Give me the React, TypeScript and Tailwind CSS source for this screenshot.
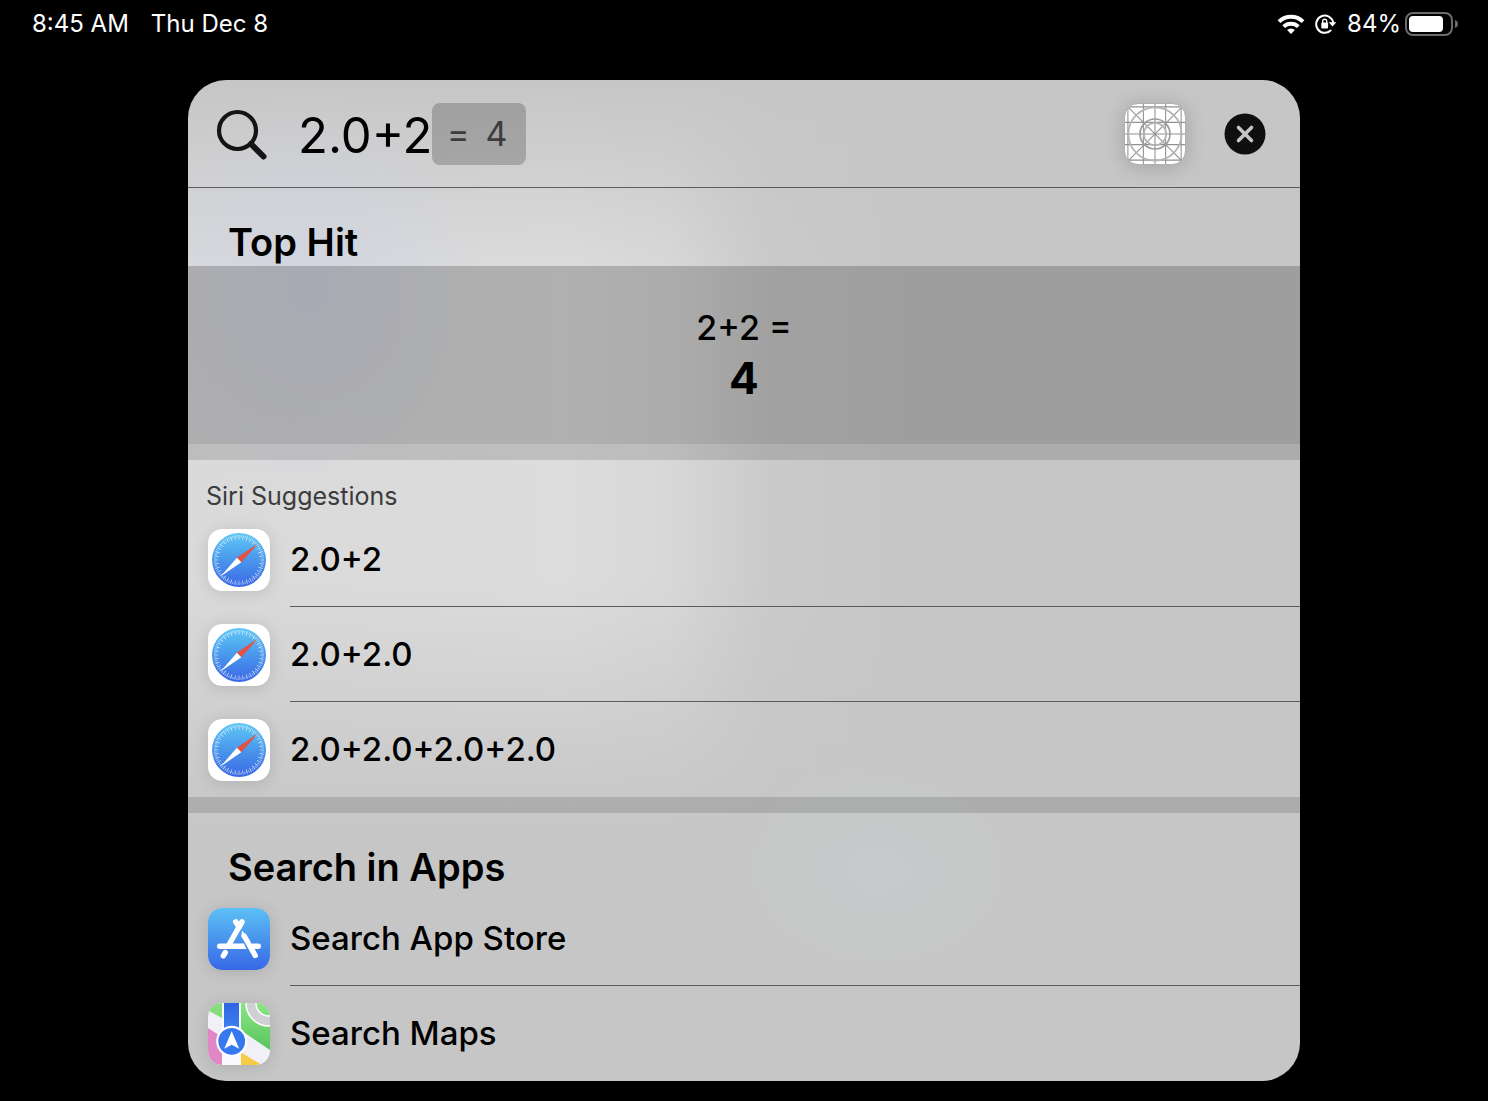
import { useState } from "react";
import type { ReactNode } from "react";

function WifiIcon() {
  return (
    <svg width="28" height="22" viewBox="0 0 28 22" fill="none" stroke="#fff" strokeWidth="4" aria-hidden="true">
      <path d="M2 8.600a17.400 17.400 0 0 1 24 0" />
      <path d="M6.700 13.600a10.600 10.600 0 0 1 14.600 0" />
      <path d="M14 21l-3.900-4a5.600 5.600 0 0 1 7.800 0z" fill="#fff" stroke="none" />
    </svg>
  );
}

function RotationLockIcon() {
  return (
    <svg width="22" height="22" viewBox="0 0 22 22" fill="none" aria-hidden="true">
      <path d="M15.600 17.600A8.600 8.600 0 1 1 18.200 9.400" stroke="#fff" strokeWidth="2" strokeLinecap="round" />
      <path d="M13.600 9.200h7.800l-3.900 4.400z" fill="#fff" />
      <rect x="6.300" y="9.600" width="6.800" height="5.800" rx="1" fill="#fff" />
      <path d="M7.700 10V8.200a2 2 0 0 1 4 0V10" stroke="#fff" strokeWidth="1.400" />
    </svg>
  );
}

function BatteryIcon() {
  return (
    <svg width="54" height="24" viewBox="0 0 54 24" fill="none" aria-hidden="true">
      <rect x="1" y="1" width="46" height="22" rx="7" stroke="#6b6b6b" strokeWidth="2" />
      <rect x="4" y="4" width="34" height="16" rx="4" fill="#fff" />
      <path d="M50 8c2.200.6 3 2.300 3 4s-.8 3.400-3 4z" fill="#6b6b6b" />
    </svg>
  );
}

function SearchIcon() {
  return (
    <svg width="52" height="52" viewBox="0 0 52 52" fill="none" stroke="#141414" aria-hidden="true">
      <circle cx="21.500" cy="21.500" r="18.500" strokeWidth="4.200" />
      <path d="M35 35l12.500 12.500" strokeWidth="6" strokeLinecap="round" />
    </svg>
  );
}

function GridIcon() {
  const marks = [3, 19, 31, 42, 58];
  return (
    <svg
      width="62"
      height="62"
      viewBox="0 0 62 62"
      fill="none"
      className="rounded-[14px] border border-[#b0b0b0] bg-white shadow-[0_2px_20px_rgba(0,0,0,0.18)]"
      role="img"
      aria-label="App"
    >
      <g stroke="#909090" strokeWidth="1.100">
        {marks.map((m) => (
          <path key={m} d={`M${m} 0V62M0 ${m}H62`} />
        ))}
        <path d="M0 0L62 62M62 0L0 62" />
      </g>
      <g stroke="#b4b4b4" strokeWidth="1.800">
        <circle cx="31" cy="31" r="27.500" />
        <circle cx="31" cy="31" r="15.500" stroke="#9c9c9c" />
        <circle cx="31" cy="31" r="11.500" />
      </g>
    </svg>
  );
}

function ClearIcon() {
  return (
    <svg width="42" height="42" viewBox="0 0 42 42" fill="none" aria-hidden="true">
      <circle cx="21" cy="21" r="20.500" fill="#0f0f0f" />
      <path d="M14.500 14.500l13 13M27.500 14.500l-13 13" stroke="#c6c6c6" strokeWidth="3.600" strokeLinecap="round" />
    </svg>
  );
}

const iconFrame = "shrink-0 rounded-[14px] shadow-[0_2px_16px_rgba(0,0,0,0.13)]";

function SafariIcon() {
  return (
    <svg width="62" height="62" viewBox="0 0 62 62" fill="none" className={iconFrame} aria-hidden="true">
      <defs>
        <linearGradient id="safari-dial" x1="0" y1="0" x2="0" y2="1">
          <stop offset="0" stopColor="#5fc8f5" />
          <stop offset="0.500" stopColor="#4a97ec" />
          <stop offset="1" stopColor="#3a67e6" />
        </linearGradient>
      </defs>
      <rect width="62" height="62" rx="14" fill="#fff" />
      <circle cx="31" cy="31" r="27" fill="url(#safari-dial)" />
      <circle cx="31" cy="31" r="22.800" stroke="#fff" strokeOpacity="0.7" strokeWidth="4.400" pathLength="360" strokeDasharray="2.200 7.800" strokeDashoffset="1.100" />
      <circle cx="31" cy="31" r="23.800" stroke="#fff" strokeOpacity="0.6" strokeWidth="2.400" pathLength="360" strokeDasharray="2 8" strokeDashoffset="6" />
      <path d="M50 14.500L28.900 28.700L33.300 33.300z" fill="#e5503f" />
      <path d="M12.500 47.500L28.900 28.700L33.300 33.300z" fill="#fff" />
    </svg>
  );
}

function AppStoreIcon() {
  return (
    <svg width="62" height="62" viewBox="0 0 62 62" fill="none" className={iconFrame} aria-hidden="true">
      <defs>
        <linearGradient id="store-fill" x1="0" y1="0" x2="0" y2="1">
          <stop offset="0" stopColor="#5cc0f5" />
          <stop offset="1" stopColor="#3768e6" />
        </linearGradient>
      </defs>
      <rect width="62" height="62" rx="14" fill="url(#store-fill)" />
      <g stroke="#fff" strokeWidth="5.400" strokeLinecap="round">
        <path d="M27.700 13.800L31 19" />
        <path d="M34 13.800L20.800 37" strokeLinecap="butt" />
        <path d="M34 13.800L31 19" />
        <path d="M17.300 44.500L15.300 47.800" />
        <path d="M11.700 38.300H34" />
        <path d="M45 38.300H50.300" />
        <path d="M36.200 28L47.200 47.500" />
      </g>
      <path d="M34.600 22.500c-1.400 2.500-1.600 5-.4 7.600l5.200 1z" fill="#fff" />
      <path d="M33.500 35.600h2l3.200 5.400h-5z" fill="#fff" />
    </svg>
  );
}

function MapsIcon() {
  return (
    <svg width="62" height="62" viewBox="0 0 62 62" fill="none" className={iconFrame} aria-hidden="true">
      <defs>
        <clipPath id="maps-clip">
          <rect width="62" height="62" rx="14" />
        </clipPath>
        <linearGradient id="maps-green" x1="0" y1="0" x2="0" y2="1">
          <stop offset="0" stopColor="#8be682" />
          <stop offset="1" stopColor="#58c45f" />
        </linearGradient>
        <linearGradient id="maps-blue" x1="0" y1="0" x2="0" y2="1">
          <stop offset="0" stopColor="#2f64e2" />
          <stop offset="1" stopColor="#3f84f3" />
        </linearGradient>
      </defs>
      <g clipPath="url(#maps-clip)">
        <rect width="62" height="62" fill="#f0f0f6" />
        <path d="M0 0H14V15L0 7.500z" fill="#86dd7b" />
        <path d="M33 0H62V47L33 27.500z" fill="url(#maps-green)" />
        <circle cx="61" cy="0" r="18" stroke="#fff" strokeWidth="11.500" />
        <circle cx="61" cy="0" r="18" stroke="#cfcfd4" strokeWidth="8.500" />
        <path d="M0 25L14 34V62H0z" fill="#e287c6" />
        <path d="M33 49.500L54 62H33z" fill="#f6cb45" />
        <path d="M14 0H33V62H14z" fill="#fafafd" />
        <path d="M16 0H31V30H16z" fill="url(#maps-blue)" />
        <circle cx="23.700" cy="38.300" r="15.500" fill="#fff" />
        <circle cx="23.700" cy="38.300" r="13.400" fill="#3578f0" />
        <path d="M23.700 28.300L31.200 45.800L23.700 41.800L16.200 45.800z" fill="#fff" />
      </g>
    </svg>
  );
}

function ResultRow({ icon, label, last }: { icon: ReactNode; label: string; last?: boolean }) {
  return (
    <li>
      <button type="button" className="flex h-[95px] w-full items-center gap-5 pl-5 text-left">
        {icon}
        <span
          className={`flex h-full flex-1 items-center border-b text-[33px] leading-10 font-medium ${
            last ? "border-transparent" : "border-[#5c5c5c]"
          }`}
        >
          {label}
        </span>
      </button>
    </li>
  );
}

function SectionTitle({ children }: { children: ReactNode }) {
  return <h2 className="h-[78px] px-10 pt-[30px] text-[38px] leading-12 font-semibold">{children}</h2>;
}

function Divider() {
  return <div className="h-4 bg-black/13" />;
}

const suggestions = ["2.0+2", "2.0+2.0", "2.0+2.0+2.0+2.0"];

export default function App() {
  const [query, setQuery] = useState("2.0+2");

  return (
    <div className="min-h-screen bg-black pb-5 font-['Inter',sans-serif] text-black">
      <header className="flex h-12 items-center justify-between pr-[29px] pl-8 text-2xl text-white">
        <div className="flex gap-[22px]">
          <span>8:45 AM</span>
          <span>Thu Dec 8</span>
        </div>
        <div className="flex items-center">
          <WifiIcon />
          <span className="ml-2.5 flex">
            <RotationLockIcon />
          </span>
          <span className="mr-1 ml-2.5">84%</span>
          <BatteryIcon />
        </div>
      </header>

      <main className="mx-[188px] mt-8 overflow-hidden rounded-[38px] bg-[#c6c6c6] bg-[radial-gradient(ellipse_180px_200px_at_120px_210px,rgba(204,210,228,0.6),rgba(204,210,228,0)),radial-gradient(ellipse_150px_110px_at_690px_790px,rgba(198,205,206,0.6),rgba(198,205,206,0)),linear-gradient(to_bottom,rgb(198,198,198),rgba(198,198,198,0)_190px,rgba(198,198,198,0)_500px,rgb(198,198,198)_750px),linear-gradient(to_right,#dadadb,#dcdcdc_380px,#d8d8d8_480px,#cacaca_580px,#c6c6c6_720px)]">
        <form className="flex h-[108px] items-center border-b border-[#5c5c5c] pr-[34px] pl-7" onSubmit={(e) => e.preventDefault()}>
          <label htmlFor="query" aria-label="Search" className="pt-0.5">
            <SearchIcon />
          </label>
          <input
            id="query"
            value={query}
            onChange={(e) => setQuery(e.target.value)}
            autoComplete="off"
            className="ml-[30px] w-[134px] bg-transparent pt-1 text-[49px] leading-[60px] outline-none"
          />
          <output htmlFor="query" className="flex h-[62px] w-[94px] items-center gap-4 rounded-lg bg-black/20 px-[15px] text-[34px] text-[#3c3c3c]">
            <span>=</span>
            <span>4</span>
          </output>
          <div className="ml-auto flex items-center gap-[38px]">
            <GridIcon />
            <button type="button" aria-label="Clear search" onClick={() => setQuery("")}>
              <ClearIcon />
            </button>
          </div>
        </form>

        <section>
          <SectionTitle>Top Hit</SectionTitle>
          <button type="button" className="flex h-[178px] w-full flex-col items-center justify-center bg-black/20 pb-0.5">
            <span className="text-[34px] leading-12 font-medium">2+2 =</span>
            <span className="text-[44px] leading-[52px] font-bold">4</span>
          </button>
        </section>

        <Divider />

        <section>
          <h3 className="h-[52px] px-[18px] pt-5 text-[25px] leading-8 text-[#3c3c3c]">Siri Suggestions</h3>
          <ul>
            {suggestions.map((label, i) => (
              <ResultRow key={label} icon={<SafariIcon />} label={label} last={i === suggestions.length - 1} />
            ))}
          </ul>
        </section>

        <Divider />

        <section>
          <SectionTitle>Search in Apps</SectionTitle>
          <ul>
            <ResultRow icon={<AppStoreIcon />} label="Search App Store" />
            <ResultRow icon={<MapsIcon />} label="Search Maps" last />
          </ul>
        </section>
      </main>
    </div>
  );
}
